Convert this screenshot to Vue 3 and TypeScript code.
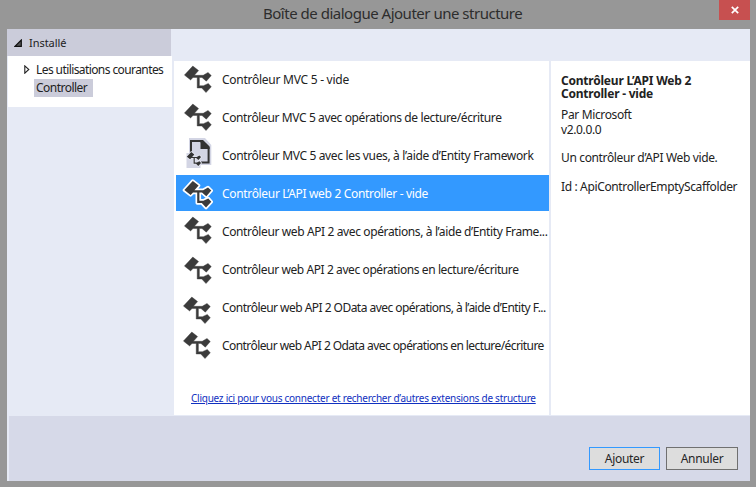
<script setup lang="ts">
interface Item {
  label: string
  kind: string
  spacing: number
  dx: number
  dy: number
}

const items: Item[] = [
  { label: 'Contrôleur MVC 5 - vide', kind: 'plain', spacing: -0.26, dx: 0, dy: 0 },
  { label: 'Contrôleur MVC 5 avec opérations de lecture/écriture', kind: 'plain', spacing: -0.38, dx: 0, dy: 0 },
  { label: 'Contrôleur MVC 5 avec les vues, à l’aide d’Entity Framework', kind: 'page', spacing: -0.345, dx: 0, dy: 0 },
  { label: 'Contrôleur L’API web 2 Controller - vide', kind: 'selected', spacing: -0.33, dx: 0, dy: 1 },
  { label: 'Contrôleur web API 2 avec opérations, à l’aide d’Entity Frame...', kind: 'plain', spacing: -0.38, dx: 0, dy: -1 },
  { label: 'Contrôleur web API 2 avec opérations en lecture/écriture', kind: 'plain', spacing: -0.41, dx: 0, dy: 1 },
  { label: 'Contrôleur web API 2 OData avec opérations, à l’aide d’Entity F...', kind: 'plain', spacing: -0.53, dx: -1, dy: 3 },
  { label: 'Contrôleur web API 2 Odata avec opérations en lecture/écriture', kind: 'plain', spacing: -0.57, dx: -1, dy: 0 },
]

const glyph =
  'M8.8 0 14.6 4.6 10.4 9.3H19.2L24 6.4 27.3 9.6 22.3 15.2 18 11.5H15.4V19.7H19.4L24.3 17.4 27.3 20.8 22 26.6 17.8 22H13.2V11.5H9L6.6 13.9 .4 9.1Z'
</script>

<template>
  <div class="window">
    <header class="titlebar">
      <h1>Boîte de dialogue Ajouter une structure</h1>
      <button class="close" aria-label="Fermer">
        <svg width="8" height="8" viewBox="0 0 8 8"><path d="M.8.8 7.2 7.2M7.2.8.8 7.2" /></svg>
      </button>
    </header>
    <main class="body">
      <aside class="side">
        <div class="side-head">
          <svg width="8" height="8" viewBox="0 0 8 8"><path d="M7.3 1V7.3H1Z" fill="#555" stroke="#111" stroke-width="1.2" /></svg>
          <span>Installé</span>
        </div>
        <div class="tree">
          <div class="node">
            <svg width="6" height="9" viewBox="0 0 6 9"><path d="M.8 .8 4.8 4.5.8 8.2Z" fill="none" stroke="#222" stroke-width="1.1" /></svg>
            <span>Les utilisations courantes</span>
          </div>
          <div class="leaf"><span>Controller</span></div>
        </div>
      </aside>
      <section class="list">
        <div v-for="item in items" :key="item.label" class="row" :class="item.kind">
          <svg v-if="item.kind === 'page'" class="page-icon" width="27" height="34" viewBox="0 0 27 34">
            <path d="M4 0H20L26.3 7V27H15.5V30H1.5V15H4Z" fill="#d3d5e4" />
            <path d="M6 16V3H15.5L23.6 10V24.5H16" fill="none" stroke="#333" stroke-width="2" />
            <path d="M15.5 2H18L24.6 8.5V11H15.5Z" fill="#333" />
            <path :d="glyph" transform="translate(1.6 14) scale(.53)" fill="#333" stroke="#e4e6f0" stroke-width="3" paint-order="stroke" />
          </svg>
          <svg
            v-else
            class="icon"
            width="31"
            height="31"
            viewBox="-2 -2 31 31"
            :style="{ transform: `translate(${item.dx}px, ${item.dy}px)` }"
          >
            <path :d="glyph" class="glyph" />
          </svg>
          <span class="label" :style="{ letterSpacing: item.spacing + 'px' }">{{ item.label }}</span>
        </div>
        <a class="link">Cliquez ici pour vous connecter et rechercher d’autres extensions de structure</a>
      </section>
      <section class="details">
        <h2>Contrôleur L’API Web 2<br />Controller - vide</h2>
        <p class="author">Par Microsoft<br />v2.0.0.0</p>
        <p class="desc">Un contrôleur d’API Web vide.</p>
        <p class="ident">Id : ApiControllerEmptyScaffolder</p>
      </section>
    </main>
    <footer class="footer">
      <button class="btn primary">Ajouter</button>
      <button class="btn cancel">Annuler</button>
    </footer>
  </div>
</template>

<style>
body {
  margin: 0;
  overflow: hidden;
}
</style>

<style scoped>
.window {
  box-sizing: border-box;
  width: 756px;
  height: 487px;
  padding: 0 6px 6px 7px;
  background: #979797;
  color: #222;
  font: 12px/16px 'Noto Sans', 'Open Sans', sans-serif;
  letter-spacing: -0.36px;
  white-space: nowrap;
}
.titlebar {
  display: flex;
  height: 29px;
}
h1 {
  flex: 1;
  margin: 0;
  padding: 3px 0 0 256px;
  font-size: 15px;
  line-height: 20px;
  font-weight: 400;
  letter-spacing: -0.49px;
  color: #2d2d2d;
}
.close {
  display: flex;
  align-items: center;
  justify-content: center;
  width: 31px;
  height: 20px;
  padding: 0;
  border: 0;
  background: #c75050;
}
.close path {
  fill: none;
  stroke: #fff;
  stroke-width: 1.7;
}
.body {
  display: grid;
  grid-template-columns: 165px 375px 199px;
  column-gap: 2px;
  height: 387px;
  background: #e6eaf5;
}
.side-head {
  display: flex;
  align-items: center;
  gap: 7px;
  box-sizing: border-box;
  width: 164px;
  height: 27px;
  padding: 1px 0 0 7px;
  background: #cbccda;
  font-size: 11px;
  letter-spacing: -0.05px;
}
.tree {
  box-sizing: border-box;
  height: 51px;
  margin-left: 1px;
  padding: 5px 0 0 16px;
  background: #fff;
}
.node {
  display: flex;
  align-items: center;
  gap: 6px;
  height: 17px;
  letter-spacing: -0.59px;
}
.leaf {
  box-sizing: border-box;
  width: 59px;
  height: 18px;
  margin: 1px 0 0 10px;
  padding-left: 2px;
  background: #cbccda;
  line-height: 18px;
  letter-spacing: -0.53px;
}
.list {
  height: 354px;
  margin-top: 32px;
  background: #fff;
}
.row {
  display: flex;
  align-items: center;
  height: 36px;
  margin: 0 0 2px 2px;
  padding-left: 6px;
}
.list,
.row {
  min-width: 0;
}
.row.selected {
  background: #3399ff;
  color: #fff;
}
.list {
  box-sizing: border-box;
  border-right: 0;
}
.icon {
  flex: none;
  margin-right: 9px;
}
.page-icon {
  flex: none;
  margin: 0 10px 0 3px;
}
.glyph {
  fill: #3b3b3b;
  stroke: #3b3b3b;
  stroke-width: 0.4;
}
.selected .glyph {
  stroke: #fff;
  stroke-width: 3.4;
  stroke-linejoin: round;
  paint-order: stroke;
}
.label {
  padding-top: 2px;
}
.link {
  display: block;
  margin: 27px 0 0 17px;
  font-size: 10px;
  line-height: 16px;
  letter-spacing: -0.25px;
  color: #1030c0;
  text-decoration: underline;
}
.details {
  box-sizing: border-box;
  height: 354px;
  margin-top: 32px;
  padding: 13px 0 0 10px;
  background: #fff;
}
h2 {
  margin: 0;
  font-size: 12px;
  line-height: 13px;
  font-weight: 700;
  letter-spacing: -0.22px;
}
p {
  margin: 0;
}
.author {
  margin-top: 8px;
  line-height: 14.5px;
}
.desc {
  margin-top: 13px;
}
.ident {
  margin-top: 13px;
}
.footer {
  display: flex;
  box-sizing: border-box;
  justify-content: flex-end;
  gap: 6px;
  height: 65px;
  padding: 31px 12px 0 0;
  border-left: 2px solid #e6eaf5;
  background: #d6d9e8;
}
.btn {
  box-sizing: border-box;
  width: 72px;
  height: 23px;
  padding: 0;
  border: 1px solid #707070;
  background: #ddd;
  color: #262626;
  font: inherit;
  line-height: 20px;
  letter-spacing: -0.3px;
}
.btn.primary {
  width: 71px;
  border-color: #3399ff;
}
.btn.cancel {
  padding-top: 1px;
}
</style>
